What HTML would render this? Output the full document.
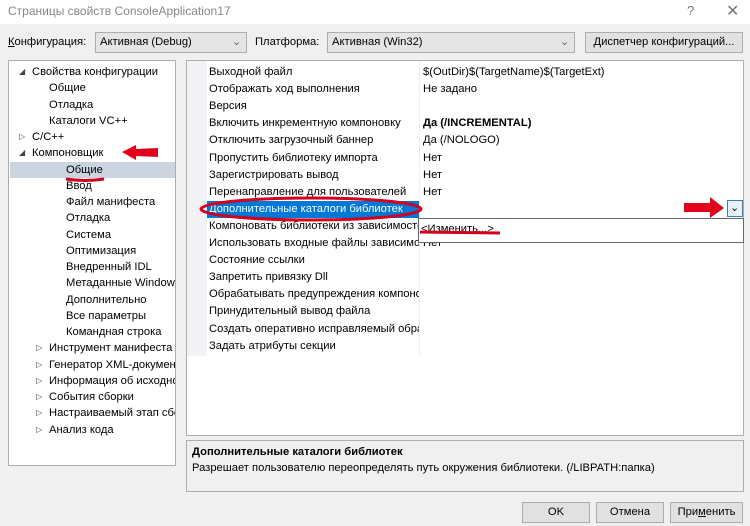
<!DOCTYPE html><html><head><meta charset="utf-8"><style>
body{margin:0;width:750px;height:526px;background:#f0f0f0;font-family:"Liberation Sans",sans-serif;font-size:11.2px;color:#000;position:relative;overflow:hidden}
.a{position:absolute;white-space:nowrap}
.box{position:absolute;background:#fff;border:1px solid #adadad;box-sizing:border-box}
.btn{position:absolute;background:#e1e1e1;border:1px solid #adadad;box-sizing:border-box;text-align:center;line-height:19px}
.t{position:absolute;left:0;white-space:nowrap;height:16px;line-height:16px}
.r{position:absolute;left:22px;width:536px;height:17px;line-height:17px;white-space:nowrap}
.r span{position:absolute;left:214px;top:0}
.tri{font-size:8px;color:#444}
</style></head><body>
<div class="a" style="left:0;top:0;width:750px;height:24px;background:#fff"></div>
<div class="a" style="left:8px;top:4px;color:#888;font-size:12px">Страницы свойств ConsoleApplication17</div>
<div class="a" style="left:687px;top:3px;color:#777;font-size:13px">?</div>
<div class="a" style="left:726px;top:1px;color:#777;font-size:16px">✕</div>
<div class="a" style="left:8px;top:36px"><u>К</u>онфигурация:</div>
<div class="box" style="left:95px;top:32px;width:152px;height:21px;background:#e5e5e5"><span class="a" style="left:4px;top:3px">Активная (Debug)</span><span class="a" style="left:136px;top:2px;color:#666">⌄</span></div>
<div class="a" style="left:255px;top:36px">Платформа:</div>
<div class="box" style="left:327px;top:32px;width:248px;height:21px;background:#e5e5e5"><span class="a" style="left:4px;top:3px">Активная (Win32)</span><span class="a" style="left:232px;top:2px;color:#666">⌄</span></div>
<div class="btn" style="left:585px;top:32px;width:158px;height:21px"><u>Д</u>испетчер конфигураций...</div>

<div class="box" style="left:8px;top:60px;width:168px;height:406px;overflow:hidden">
<div style="position:absolute;left:1px;top:101px;width:166px;height:16px;background:#ccd4e0"></div>
<div id="tree" style="position:absolute;left:0;top:3px;width:166px"></div>
</div>
<div class="box" style="left:186px;top:60px;width:558px;height:376px;overflow:hidden">
<div style="position:absolute;left:0;top:0;width:20px;height:295px;background:#f3f3f7"></div>
<div style="position:absolute;left:232px;top:0;width:1px;height:295px;background:#eee"></div>
<div style="position:absolute;left:20px;top:140px;width:212px;height:17px;background:#0078d7"></div>
<div id="grid" style="position:absolute;left:0;top:3px"></div>
</div>
<div class="box" style="left:418px;top:218px;width:326px;height:25px;border-color:#666"><span class="a" style="left:2px;top:4px">&lt;Изменить...&gt;</span></div>
<div class="box" style="left:727px;top:200px;width:16px;height:17px;background:#e5f1fb;border-color:#3c7fb1"><span class="a" style="left:2px;top:0;font-size:11px">⌄</span></div>
<div class="box" style="left:186px;top:440px;width:558px;height:52px;background:#f0f0f0"><div class="a" style="left:5px;top:5px;font-weight:bold">Дополнительные каталоги библиотек</div><div class="a" style="left:5px;top:21px">Разрешает пользователю переопределять путь окружения библиотеки. (/LIBPATH:папка)</div></div>
<div class="btn" style="left:522px;top:502px;width:68px;height:21px">OK</div>
<div class="btn" style="left:596px;top:502px;width:68px;height:21px">Отмена</div>
<div class="btn" style="left:670px;top:502px;width:73px;height:21px">При<u>м</u>енить</div>
<svg style="position:absolute;left:0;top:0" width="750" height="526">
<ellipse cx="311" cy="209" rx="110" ry="11" fill="none" stroke="#d4001c" stroke-width="3"/>
<path d="M122 152 L136 145 L136 149 L158 148 L158 157 L136 156 L136 160Z" fill="#e3001b"/>
<path d="M684 203 L710 203 L710 197 L724 208 L710 218 L710 212 L684 212Z" fill="#e3001b"/>
<path d="M66 179 Q85 182 104 179" stroke="#d4001c" stroke-width="3" fill="none"/>
<path d="M420 232 L500 233" stroke="#d4001c" stroke-width="3" fill="none"/>
</svg>
<script>
var tr=[[1,"◢","Свойства конфигурации"],[2,"","Общие"],[2,"","Отладка"],[2,"","Каталоги VC++"],[1,"▷","C/C++"],[1,"◢","Компоновщик"],[3,"","Общие"],[3,"","Ввод"],[3,"","Файл манифеста"],[3,"","Отладка"],[3,"","Система"],[3,"","Оптимизация"],[3,"","Внедренный IDL"],[3,"","Метаданные Windows"],[3,"","Дополнительно"],[3,"","Все параметры"],[3,"","Командная строка"],[2,"▷","Инструмент манифеста"],[2,"▷","Генератор XML-документ"],[2,"▷","Информация об исходно"],[2,"▷","События сборки"],[2,"▷","Настраиваемый этап сбо"],[2,"▷","Анализ кода"]];
var h="";tr.forEach(function(e,i){var x=e[0]==1?23:e[0]==2?40:57;
h+='<div class="t" style="top:'+(i*16.25)+'px;left:'+x+'px">'+e[2]+'</div>';if(e[1])h+='<div class="t tri" style="top:'+(i*16.25)+'px;left:'+(x-13)+'px">'+e[1]+'</div>';});
document.getElementById("tree").innerHTML=h;
var g=[["Выходной файл","$(OutDir)$(TargetName)$(TargetExt)"],["Отображать ход выполнения","Не задано"],["Версия",""],["Включить инкрементную компоновку","<b>Да (/INCREMENTAL)</b>"],["Отключить загрузочный баннер","Да (/NOLOGO)"],["Пропустить библиотеку импорта","Нет"],["Зарегистрировать вывод","Нет"],["Перенаправление для пользователей","Нет"],["Дополнительные каталоги библиотек",""],["Компоновать библиотеки из зависимостей",""],["Использовать входные файлы зависимостей","Нет"],["Состояние ссылки",""],["Запретить привязку Dll",""],["Обрабатывать предупреждения компоновщика",""],["Принудительный вывод файла",""],["Создать оперативно исправляемый образ",""],["Задать атрибуты секции",""]];
h="";g.forEach(function(e,i){h+='<div class="r" style="top:'+(i*17.1)+'px;'+(i==8?'color:#fff':'')+'"><div style="width:210px;overflow:hidden">'+e[0]+'</div><span>'+e[1]+'</span></div>';});
document.getElementById("grid").innerHTML=h;
</script>
</body></html>
